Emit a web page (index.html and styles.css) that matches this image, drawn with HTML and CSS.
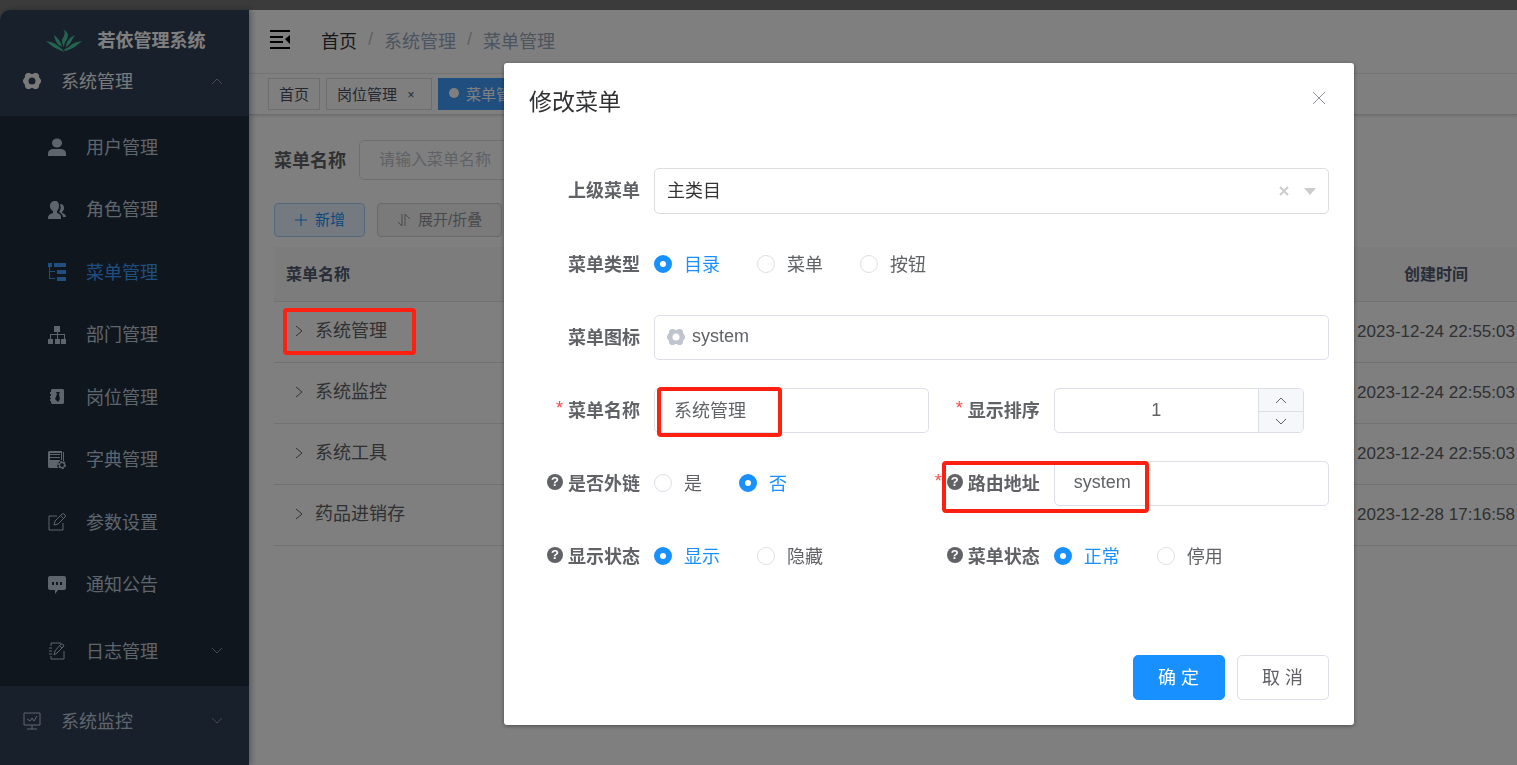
FILE: index.html
```html
<!DOCTYPE html>
<html lang="zh-CN">
<head>
    <meta charset="UTF-8">
    <meta name="viewport" content="width=device-width, initial-scale=1.0">
    <title>若依管理系统</title>
    <link rel="stylesheet" href="styles.css">
</head>
<body>

    <div class="app">
        <aside class="sidebar">
            <a class="logo" href="#">
                <svg class="logo-icon" viewBox="0 0 36 24" fill="currentColor">
                    <path d="M18 18C15 13 16 10 18 7C19 4 19 2 17 0C22 3 23 6 21 10C19 13 18 15 18 18Z"/>
                    <path d="M16 18C11 16 9 11 8 6C12 9 15 13 16 18Z"/>
                    <path d="M20 18C20 13 24 8 29 6C26 10 25 15 20 18Z"/>
                    <path d="M0 12C7 13 10 15 12 17C14 19 17 20 18 23C14 21 12 20 9 19C5 17 3 14 0 12Z"/>
                    <path d="M36 12C29 13 26 15 24 17C22 19 20 19 18 21L19 22C23 21 24 20 27 19C31 17 33 14 36 12Z"/>
                </svg>
                <h1>若依管理系统</h1>
            </a>
            <nav>
                <a class="menu-title opened" href="#">
                    <svg class="icon" viewBox="0 0 18 18"><path fill="currentColor" fill-rule="evenodd" d="M4 1H7L8 2H10L11 1H14L16 3V5L18 8V10L16 13V15L14 17H11L10 16H8L7 17H4L2 15V13L0 10V8L2 5V3ZM9 5.5A3.5 3.5 0 1 0 9 12.5A3.5 3.5 0 1 0 9 5.5Z"/></svg>
                    <span>系统管理</span>
                    <svg class="arrow" viewBox="0 0 12 12"><path d="M1 9L6 4L11 9"/></svg>
                </a>
                <div class="submenu">
                    <div class="submenu-list">
                        <a href="#">
                            <svg class="icon" viewBox="0 0 18 18" fill="currentColor"><ellipse cx="9" cy="5" rx="5" ry="4.5"/><path d="M0 18V16C0 12 3 11 6 11H12C15 11 18 12 18 16V18Z"/></svg>
                            <span>用户管理</span>
                        </a>
                        <a href="#">
                            <svg class="icon" viewBox="0 0 18 18" fill="currentColor"><path d="M7 0C10 0 11 2 11 5C11 7 10 9 9 10V12C12 13 13 14 13 17V18H0V17C0 14 2 13 5 12V10C3 9 2 7 2 5C2 2 4 0 7 0Z"/><path d="M12 3C15 3 16 5 16 7C16 9 15 10 14 11V12C17 13 18 14 18 16H15C15 14 13 12 11 11C13 9 13 6 12 3Z"/></svg>
                            <span>角色管理</span>
                        </a>
                        <a class="active" href="#">
                            <svg class="icon" viewBox="0 0 18 18" fill="currentColor"><path d="M0 0H4V4H0ZM6 0H18V4H6ZM9 7H18V11H9ZM9 14H18V18H9Z"/><path d="M1 4H2V8H7V9H2V15H7V16H1Z"/></svg>
                            <span>菜单管理</span>
                        </a>
                        <a href="#">
                            <svg class="icon" viewBox="0 0 18 18" fill="currentColor"><path d="M6 0H12V6H6ZM0 13H5V18H0ZM7 13H12V18H7ZM13 13H18V18H13Z"/><path d="M9 6H10V8H17V13H16V9H10V13H9V9H3V13H2V8H9Z"/></svg>
                            <span>部门管理</span>
                        </a>
                        <a href="#">
                            <svg class="icon" viewBox="0 0 18 18" fill="currentColor"><path fill-rule="evenodd" d="M4 1H15L16 2V15L15 16H4L3 15V13H2V11H3V10H2V8H3V6H2V4H3V2ZM8 4L9 6L7 11L10 14L12 11L11 6L12 4Z"/></svg>
                            <span>岗位管理</span>
                        </a>
                        <a href="#">
                            <svg class="icon" viewBox="0 0 18 18" fill="currentColor"><path fill-rule="evenodd" d="M1 0H14V9H13V2H2V3H12V4H2V6H12V7H2V9H12V10L10 12L9 16H10V17H1L0 16V1Z"/><path d="M15 1H16V10H15Z"/><circle cx="14" cy="14" r="3" fill="none" stroke="currentColor" stroke-width="2" stroke-dasharray="2 1"/><circle cx="14" cy="14" r="2.5" fill="none" stroke="currentColor"/></svg>
                            <span>字典管理</span>
                        </a>
                        <a href="#">
                            <svg class="icon line" viewBox="0 0 18 18"><path d="M9 3H1V17H15V10M6 12L7 8L14 1Q16 0 17 2Q18 3 17 4L10 11ZM13 3L15 5"/></svg>
                            <span>参数设置</span>
                        </a>
                        <a href="#">
                            <svg class="icon" viewBox="0 0 18 18" fill="currentColor"><path fill-rule="evenodd" d="M2 0H16Q18 0 18 2V12Q18 14 16 14H10L7 18V14H2Q0 14 0 12V2Q0 0 2 0ZM4 6V9H6V6ZM8 6V9H10V6ZM12 6V9H14V6Z"/></svg>
                            <span>通知公告</span>
                        </a>
                    </div>
                    <a class="menu-title nested" href="#">
                        <svg class="icon line" viewBox="0 0 18 18"><path d="M13 1H3V4M3 14V17H16V9M1 6H4M1 9H4M1 12H4M6 13L7 9L13 2Q15 1 16 4L9 11ZM12 4L14 6"/></svg>
                        <span>日志管理</span>
                        <svg class="arrow" viewBox="0 0 12 12"><path d="M1 3L6 8L11 3"/></svg>
                    </a>
                </div>
                <a class="menu-title" href="#">
                    <svg class="icon line" viewBox="0 0 18 18"><path d="M1 1H17V13H1ZM9 13V17M4 17H14M4 7L7 9L9 6L11 9L14 4"/></svg>
                    <span>系统监控</span>
                    <svg class="arrow" viewBox="0 0 12 12"><path d="M1 3L6 8L11 3"/></svg>
                </a>
            </nav>
        </aside>

        <div class="main">
            <header>
                <div class="navbar">
                    <button type="button" class="hamburger" aria-label="折叠菜单">
                        <svg viewBox="0 0 21 19" width="21" height="19"><path d="M0 0H20V2H0ZM0 6H13V8H0ZM0 11H13V13H0ZM0 17H20V19H0ZM20 5V14L15 9Z"/></svg>
                    </button>
                    <div class="breadcrumb">
                        <a href="#">首页</a>
                        <i>/</i>
                        <span>系统管理</span>
                        <i>/</i>
                        <span>菜单管理</span>
                    </div>
                </div>
                <div class="tags">
                    <a class="tag" href="#">首页</a>
                    <a class="tag" href="#">岗位管理 <span class="tag-close">×</span></a>
                    <a class="tag active" href="#">菜单管理</a>
                </div>
            </header>

            <main class="content">
                <div class="search">
                    <label for="searchName">菜单名称</label>
                    <input type="text" id="searchName" placeholder="请输入菜单名称">
                </div>
                <div class="toolbar">
                    <button type="button" class="btn-small btn-add">
                        <svg viewBox="0 0 14 14"><path d="M7 1V13M1 7H13"/></svg>
                        <span>新增</span>
                    </button>
                    <button type="button" class="btn-small">
                        <svg viewBox="0 0 14 14"><path d="M5 1V13L1 9M8 13V1L13 6"/></svg>
                        <span>展开/折叠</span>
                    </button>
                </div>
                <table class="menu-table">
                    <thead>
                        <tr><th>菜单名称</th><th class="time">创建时间</th></tr>
                    </thead>
                    <tbody>
                        <tr>
                            <td><svg class="expand" viewBox="0 0 8 12"><path d="M1 1L7 6L1 11"/></svg>系统管理<span class="mark mark-row"></span></td>
                            <td class="time">2023-12-24 22:55:03</td>
                        </tr>
                        <tr>
                            <td><svg class="expand" viewBox="0 0 8 12"><path d="M1 1L7 6L1 11"/></svg>系统监控</td>
                            <td class="time">2023-12-24 22:55:03</td>
                        </tr>
                        <tr>
                            <td><svg class="expand" viewBox="0 0 8 12"><path d="M1 1L7 6L1 11"/></svg>系统工具</td>
                            <td class="time">2023-12-24 22:55:03</td>
                        </tr>
                        <tr>
                            <td><svg class="expand" viewBox="0 0 8 12"><path d="M1 1L7 6L1 11"/></svg>药品进销存</td>
                            <td class="time">2023-12-28 17:16:58</td>
                        </tr>
                    </tbody>
                </table>
            </main>
        </div>
    </div>

    <div class="overlay">
        <form class="dialog" role="dialog" aria-labelledby="dialogTitle">
            <div class="dialog-header">
                <h2 id="dialogTitle">修改菜单</h2>
                <button type="button" class="dialog-close" aria-label="关闭">
                    <svg viewBox="0 0 14 14"><path d="M1 1L13 13M13 1L1 13"/></svg>
                </button>
            </div>

            <div class="form-grid">
                <div class="form-item wide">
                    <label class="label" for="parent">上级菜单</label>
                    <div class="select-box">
                        <select id="parent"><option>主类目</option></select>
                        <button type="button" class="clear" aria-label="清除">
                            <svg viewBox="0 0 10 10"><path d="M1 1L9 9M9 1L1 9"/></svg>
                        </button>
                        <svg class="caret" viewBox="0 0 12 7"><path d="M0 0H12L6 7Z"/></svg>
                    </div>
                </div>

                <div class="form-item wide" role="radiogroup" aria-labelledby="typeLabel">
                    <span class="label" id="typeLabel">菜单类型</span>
                    <div class="radios">
                        <label><input type="radio" name="type" checked><span>目录</span></label>
                        <label><input type="radio" name="type"><span>菜单</span></label>
                        <label><input type="radio" name="type"><span>按钮</span></label>
                    </div>
                </div>

                <div class="form-item wide">
                    <label class="label" for="icon">菜单图标</label>
                    <div class="icon-box">
                        <svg viewBox="0 0 18 18"><path fill="currentColor" fill-rule="evenodd" d="M4 1H7L8 2H10L11 1H14L16 3V5L18 8V10L16 13V15L14 17H11L10 16H8L7 17H4L2 15V13L0 10V8L2 5V3ZM9 5.5A3.5 3.5 0 1 0 9 12.5A3.5 3.5 0 1 0 9 5.5Z"/></svg>
                        <input type="text" id="icon" value="system">
                    </div>
                </div>

                <div class="form-item">
                    <label class="label required" for="name">菜单名称</label>
                    <input type="text" class="text-input" id="name" value="系统管理">
                    <span class="mark mark-name"></span>
                </div>
                <div class="form-item">
                    <label class="label required" for="sort">显示排序</label>
                    <div class="number-box">
                        <input type="text" inputmode="numeric" id="sort" value="1">
                        <div class="stepper">
                            <button type="button" aria-label="增加"><svg viewBox="0 0 12 12"><path d="M1 9L6 4L11 9"/></svg></button>
                            <button type="button" aria-label="减少"><svg viewBox="0 0 12 12"><path d="M1 3L6 8L11 3"/></svg></button>
                        </div>
                    </div>
                </div>

                <div class="form-item" role="radiogroup" aria-labelledby="frameLabel">
                    <span class="label" id="frameLabel"><b class="help">?</b>是否外链</span>
                    <div class="radios">
                        <label><input type="radio" name="frame"><span>是</span></label>
                        <label><input type="radio" name="frame" checked><span>否</span></label>
                    </div>
                </div>
                <div class="form-item">
                    <label class="label required" for="path"><b class="help">?</b>路由地址</label>
                    <input type="text" class="text-input" id="path" value="system">
                    <span class="mark mark-path"></span>
                </div>

                <div class="form-item" role="radiogroup" aria-labelledby="visibleLabel">
                    <span class="label" id="visibleLabel"><b class="help">?</b>显示状态</span>
                    <div class="radios">
                        <label><input type="radio" name="visible" checked><span>显示</span></label>
                        <label><input type="radio" name="visible"><span>隐藏</span></label>
                    </div>
                </div>
                <div class="form-item" role="radiogroup" aria-labelledby="statusLabel">
                    <span class="label" id="statusLabel"><b class="help">?</b>菜单状态</span>
                    <div class="radios">
                        <label><input type="radio" name="status" checked><span>正常</span></label>
                        <label><input type="radio" name="status"><span>停用</span></label>
                    </div>
                </div>
            </div>

            <div class="dialog-footer">
                <button type="button" class="btn btn-primary">确 定</button>
                <button type="button" class="btn">取 消</button>
            </div>
        </form>
    </div>

</body>
</html>
```

FILE: styles.css
```css
* {
    box-sizing: border-box;
}

body {
    margin: 0;
    height: 100vh;
    overflow: hidden;
    padding-top: 10px;
    background-color: #777;
    color: #606266;
    font-family: "Liberation Sans", "Noto Sans CJK SC", sans-serif;
    font-size: 18px;
}

a {
    color: inherit;
    text-decoration: none;
}

button,
input,
select {
    font-family: inherit;
    font-size: inherit;
    color: inherit;
    margin: 0;
    padding: 0;
    outline: none;
}

button {
    cursor: pointer;
    background: none;
    border: none;
}

svg {
    flex: none;
}

.app {
    display: flex;
    height: 100%;
}

/* sidebar */
.sidebar {
    position: relative;
    z-index: 2;
    flex: none;
    width: 249px;
    overflow: hidden;
    background-color: #304156;
    color: #bfcbd9;
    border-radius: 10px 0 0 0;
    box-shadow: 2px 0 6px rgba(0, 21, 41, 0.35);
}

.logo {
    display: flex;
    align-items: center;
    justify-content: center;
    gap: 16px;
    height: 36px;
    padding: 26px 0 0 2px;
    color: #46c8a0;
}

.logo-icon {
    width: 36px;
    height: 24px;
}

.logo h1 {
    margin: 0;
    font-size: 18px;
    line-height: 26px;
    color: #fff;
}

.menu-title {
    display: flex;
    align-items: center;
    height: 70px;
    padding: 0 26px 0 23px;
}

.menu-title.opened {
    color: #f4f4f5;
}

.menu-title.nested {
    padding-left: 48px;
}

.sidebar nav span {
    padding-bottom: 3px;
}

.icon {
    width: 18px;
    height: 18px;
    margin-right: 20px;
}

.line,
.arrow path,
.expand path {
    fill: none;
    stroke: currentColor;
}

.arrow {
    width: 12px;
    height: 12px;
    margin-left: auto;
    color: #909399;
}

.submenu {
    background-color: #1f2d3d;
}

.submenu-list {
    display: grid;
    grid-template-rows: repeat(8, 1fr);
    height: 500px;
}

.submenu-list a {
    display: flex;
    align-items: center;
    padding-left: 48px;
}

.submenu-list .active {
    color: #409eff;
}

/* header */
.main {
    flex: 1;
    min-width: 0;
    background-color: #fff;
}

.navbar {
    display: flex;
    align-items: center;
    height: 64px;
    padding: 0 21px 4px;
    border-bottom: 1px solid #f0f0f0;
}

.hamburger {
    display: flex;
}

.breadcrumb {
    display: flex;
    align-items: center;
    margin-left: 30px;
    color: #97a8be;
}

.breadcrumb a {
    color: #303133;
}

.breadcrumb i {
    margin: 0 11px;
    font-style: normal;
    color: #c0c4cc;
}

.tags {
    display: flex;
    gap: 6px;
    height: 41px;
    padding: 4px 19px;
    border-bottom: 1px solid #d8dce5;
    box-shadow: 0 1px 3px rgba(0, 0, 0, 0.12), 0 0 3px rgba(0, 0, 0, 0.04);
}

.tag {
    display: flex;
    align-items: center;
    height: 32px;
    padding: 0 10px 2px;
    border: 1px solid #d8dce5;
    color: #495060;
    font-size: 15px;
    white-space: nowrap;
}

.tag.active {
    border-color: #409eff;
    background-color: #409eff;
    color: #fff;
}

.tag.active::before {
    content: "";
    width: 10px;
    height: 10px;
    margin-right: 7px;
    border-radius: 50%;
    background-color: #fff;
}

.tag-close {
    width: 14px;
    margin: 0 3px 0 7px;
    padding-top: 3px;
    text-align: center;
    font-size: 12px;
}

/* menu list */
.content {
    padding: 25px 0 0 25px;
}

.search {
    display: flex;
    align-items: center;
    gap: 13px;
}

.search label {
    padding-bottom: 2px;
    font-weight: bold;
}

.search input {
    width: 300px;
    height: 40px;
    padding: 0 19px;
    border: 1px solid #dcdfe6;
    border-radius: 5px;
    font-size: 16px;
}

.search input::placeholder {
    color: #c0c4cc;
}

.toolbar {
    display: flex;
    gap: 12px;
    margin: 23px 0 10px;
}

.btn-small {
    display: flex;
    align-items: center;
    gap: 7px;
    height: 34px;
    padding: 0 19px;
    border: 1px solid #d3d4d6;
    border-radius: 4px;
    background-color: #f4f4f5;
    color: #909399;
    font-size: 15px;
}

.btn-small.btn-add {
    border-color: #a3d3ff;
    background-color: #e8f4ff;
    color: #1890ff;
}

.btn-small svg {
    width: 14px;
    height: 14px;
    fill: none;
    stroke: currentColor;
}

.btn-small span {
    padding-bottom: 4px;
}

.menu-table {
    width: 100%;
    border-collapse: separate;
    border-spacing: 0;
}

.menu-table th {
    height: 55px;
    padding: 0 0 2px 12px;
    border-bottom: 1px solid #dfe6ec;
    background-color: #f8f8f9;
    color: #515a6e;
    font-size: 16px;
    text-align: left;
}

.menu-table td {
    position: relative;
    height: 61px;
    padding: 0 0 6px 21px;
    border-bottom: 1px solid #dfe6ec;
}

.menu-table .time {
    width: 162px;
    padding-left: 0;
    padding-right: 0;
    text-align: center;
    white-space: nowrap;
}

.menu-table td.time {
    padding-bottom: 1px;
    font-size: 17px;
}

.expand {
    width: 8px;
    height: 12px;
    margin-right: 12px;
}

/* dialog */
.overlay {
    position: fixed;
    inset: 0;
    z-index: 10;
    background-color: rgba(0, 0, 0, 0.5);
}

.dialog {
    width: 56vw;
    margin: 63px 0 0 504px;
    padding: 25px;
    border-radius: 3px;
    background-color: #fff;
    box-shadow: 0 1px 4px rgba(0, 0, 0, 0.4);
}

.dialog-header {
    display: flex;
    justify-content: space-between;
    height: 80px;
}

.dialog-header h2 {
    margin: 0;
    color: #303133;
    font-size: 23px;
    font-weight: normal;
    line-height: 28px;
}

.dialog-close {
    display: flex;
    align-self: flex-start;
    padding: 3px;
}

.dialog-close svg {
    width: 14px;
    height: 14px;
    fill: none;
    stroke: #909399;
}

.form-grid {
    display: grid;
    grid-template-columns: 1fr 1fr;
    row-gap: 28px;
}

.form-item {
    position: relative;
    display: flex;
    align-items: center;
    min-height: 45px;
}

.wide {
    grid-column: span 2;
}

.label {
    display: flex;
    flex: none;
    align-items: center;
    justify-content: flex-end;
    width: 125px;
    padding: 0 14px 4px 0;
    font-weight: bold;
    white-space: nowrap;
}

.required::before {
    content: "*";
    margin-right: 5px;
    color: #ff4949;
    font-weight: normal;
}

.help {
    width: 16px;
    height: 16px;
    margin-right: 5px;
    border-radius: 50%;
    background-color: #606266;
    color: #fff;
    font-size: 13px;
    line-height: 16px;
    text-align: center;
}

.text-input,
.icon-box,
.number-box,
.select-box {
    display: flex;
    align-items: center;
    flex: 1;
    min-width: 0;
    height: 45px;
    border: 1px solid #dcdfe6;
    border-radius: 5px;
    background-color: #fff;
}

.text-input {
    padding: 0 19px 3px;
}

.icon-box {
    padding: 0 12px 2px;
    gap: 7px;
    color: #c0c4cc;
}

.icon-box svg {
    width: 18px;
    height: 18px;
}

.icon-box input {
    flex: 1;
    border: none;
    color: #606266;
}

.select-box {
    height: 46px;
    padding: 0 12px;
    border-color: #ddd;
}

.select-box select {
    flex: 1;
    appearance: none;
    border: none;
    background: none;
    color: #333;
}

.clear {
    display: flex;
    margin-right: 15px;
}

.clear svg {
    width: 10px;
    height: 10px;
    fill: none;
    stroke: #ccc;
    stroke-width: 2;
}

.caret {
    width: 12px;
    height: 7px;
    fill: #ccc;
}

.number-box {
    flex: none;
    width: 250px;
    overflow: hidden;
}

.number-box input {
    flex: 1;
    min-width: 0;
    border: none;
    text-align: center;
}

.stepper {
    display: grid;
    grid-template-rows: 1fr 1fr;
    width: 45px;
    height: 100%;
    border-left: 1px solid #dcdfe6;
    background-color: #f5f7fa;
}

.stepper button {
    display: flex;
    align-items: center;
    justify-content: center;
}

.stepper button + button {
    border-top: 1px solid #dcdfe6;
}

.stepper svg {
    width: 12px;
    height: 12px;
    fill: none;
    stroke: #606266;
}

.radios {
    display: flex;
    gap: 37px;
    padding-bottom: 2px;
}

.radios label {
    display: flex;
    align-items: center;
    gap: 12px;
}

.radios span {
    padding-bottom: 2px;
}

.radios input {
    appearance: none;
    width: 18px;
    height: 18px;
    border: 1px solid #dcdfe6;
    border-radius: 50%;
    background-color: #fff;
}

.radios input:checked {
    border: 6px solid #1890ff;
}

.radios input:checked + span {
    color: #1890ff;
}

.dialog-footer {
    display: flex;
    justify-content: flex-end;
    gap: 12px;
    margin-top: 76px;
}

.btn {
    width: 92px;
    height: 45px;
    padding-bottom: 4px;
    border: 1px solid #dcdfe6;
    border-radius: 5px;
    background-color: #fff;
}

.btn-primary {
    border-color: #1890ff;
    background-color: #1890ff;
    color: #fff;
}

/* red highlight frames */
.mark {
    position: absolute;
    z-index: 20;
    border: 4px solid #ff2012;
    border-radius: 4px;
    pointer-events: none;
}

.mark-row {
    top: 6px;
    left: 9px;
    width: 133px;
    height: 47px;
}

.mark-name {
    top: -1px;
    left: 128px;
    width: 125px;
    height: 50px;
}

.mark-path {
    top: 0;
    left: 13px;
    width: 207px;
    height: 52px;
}
```
